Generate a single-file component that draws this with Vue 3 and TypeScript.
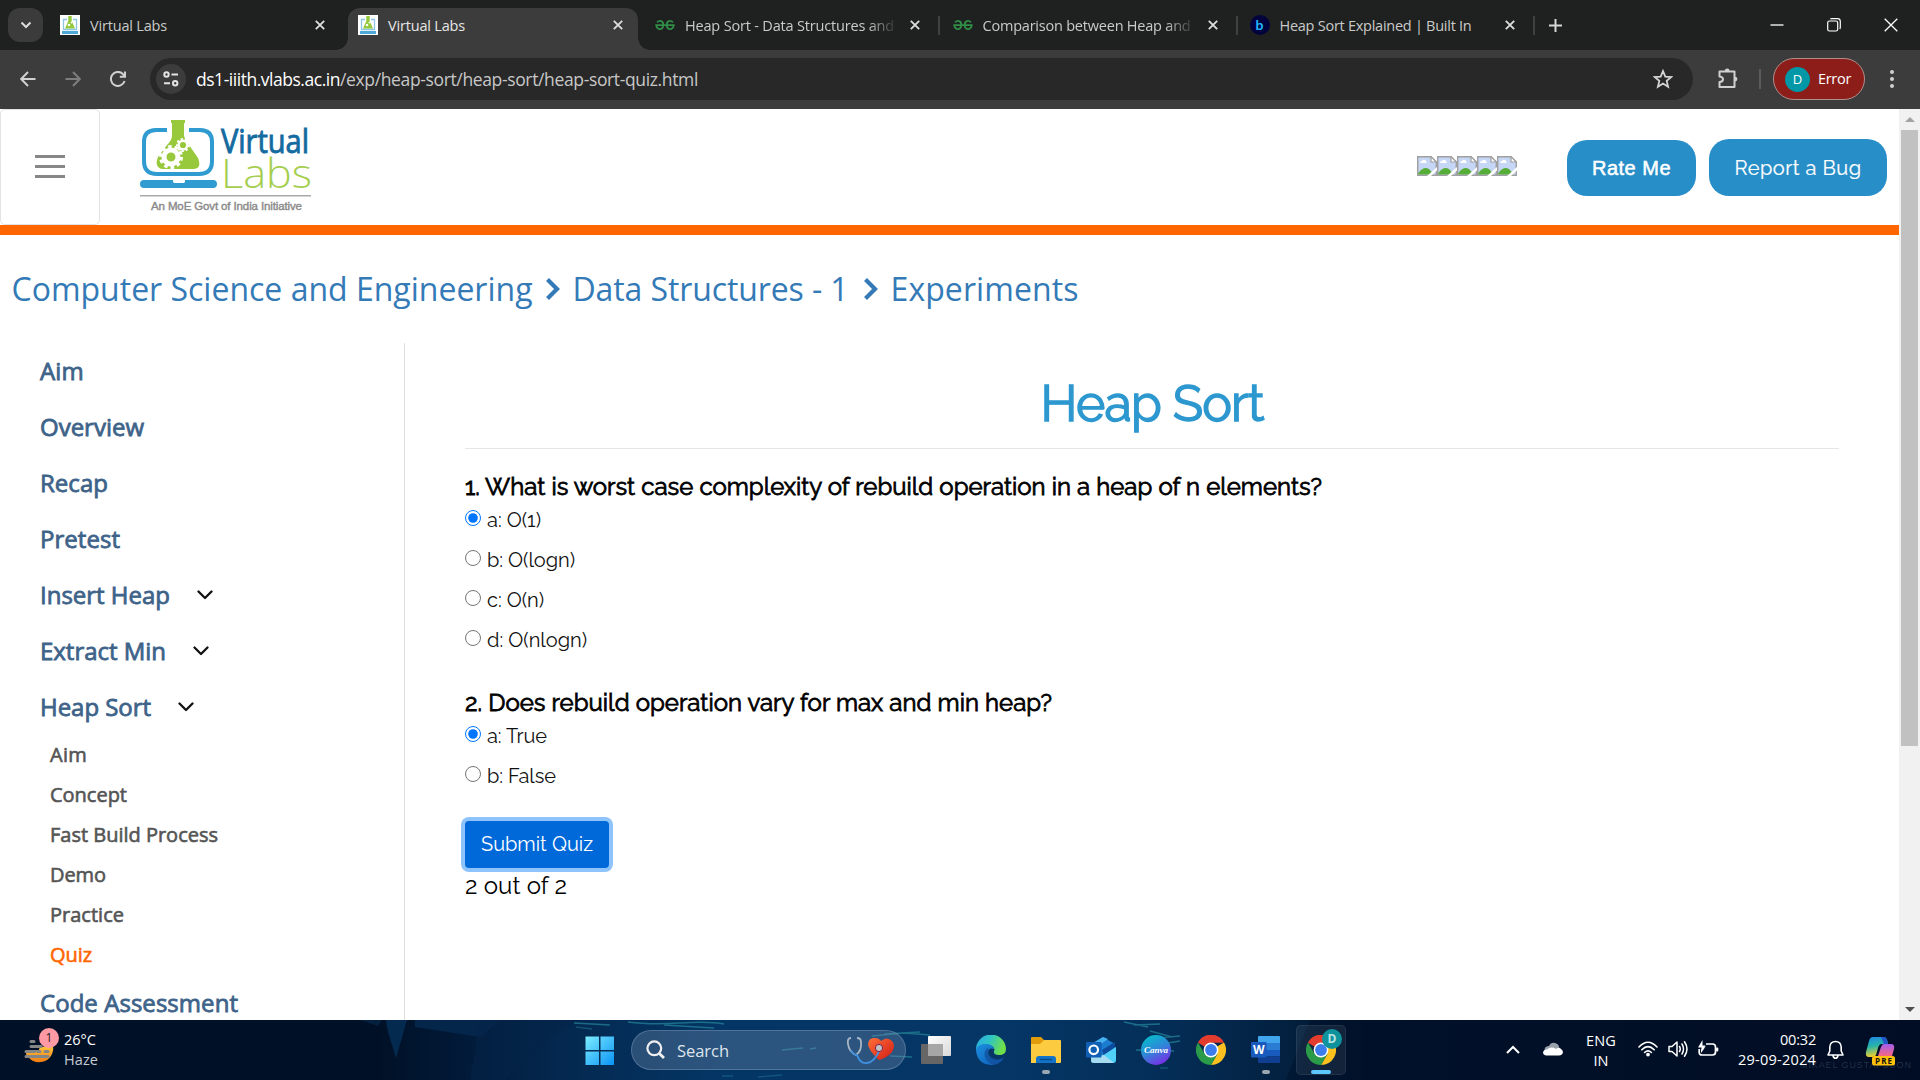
<script setup lang="ts">
import { ref } from 'vue'

interface Tab {
  title: string
  icon: 'vlabs' | 'gfg' | 'builtin'
  active?: boolean
  width?: number
  sep?: boolean
}
interface NavItem {
  label: string
  width: number
  expandable?: boolean
}
interface Option {
  key: string
  text: string
  width: number
}
interface Question {
  text: string
  width: number
  options: Option[]
}

// Tracks a line of text so that it spans the given width in pixels.
const vFit = {
  mounted(el: HTMLElement, binding: { value?: number }) {
    if (!binding.value) return
    const count = (el.textContent ?? '').trim().length
    const natural = el.getBoundingClientRect().width
    el.style.letterSpacing = `${(binding.value - natural) / count}px`
  },
}

const tabs: Tab[] = [
  { title: 'Virtual Labs', icon: 'vlabs', width: 77 },
  { title: 'Virtual Labs', icon: 'vlabs', width: 77, active: true },
  { title: 'Heap Sort - Data Structures and', icon: 'gfg', width: 209, sep: true },
  { title: 'Comparison between Heap and', icon: 'gfg', width: 208, sep: true },
  { title: 'Heap Sort Explained | Built In', icon: 'builtin', width: 192, sep: true },
]

const crumbs = [
  { label: 'Computer Science and Engineering', width: 521 },
  { label: 'Data Structures - 1', width: 276 },
  { label: 'Experiments', width: 188 },
]

const nav: NavItem[] = [
  { label: 'Aim', width: 44 },
  { label: 'Overview', width: 104 },
  { label: 'Recap', width: 68 },
  { label: 'Pretest', width: 80 },
  { label: 'Insert Heap', width: 130, expandable: true },
  { label: 'Extract Min', width: 126, expandable: true },
  { label: 'Heap Sort', width: 111, expandable: true },
]

const subNav: NavItem[] = [
  { label: 'Aim', width: 37 },
  { label: 'Concept', width: 77 },
  { label: 'Fast Build Process', width: 168 },
  { label: 'Demo', width: 56 },
  { label: 'Practice', width: 74 },
  { label: 'Quiz', width: 42 },
]

const questions: Question[] = [
  {
    text: '1. What is worst case complexity of rebuild operation in a heap of n elements?',
    width: 857,
    options: [
      { key: 'a', text: 'a: O(1)', width: 54 },
      { key: 'b', text: 'b: O(logn)', width: 88 },
      { key: 'c', text: 'c: O(n)', width: 57 },
      { key: 'd', text: 'd: O(nlogn)', width: 100 },
    ],
  },
  {
    text: '2. Does rebuild operation vary for max and min heap?',
    width: 587,
    options: [
      { key: 'a', text: 'a: True', width: 60 },
      { key: 'b', text: 'b: False', width: 69 },
    ],
  },
]

const answers = ref<string[]>(['a', 'a'])
</script>

<template>
  <div class="screen">
    <svg class="defs" width="0" height="0">
      <defs>
        <symbol id="flask" viewBox="0 0 171 92">
          <path d="M27 11H16Q4 11 4 23V42Q4 55 17 55H59Q72 55 72 42V23Q72 11 60 11H49" fill="none" stroke="#2f9bd1" stroke-width="4" />
          <path d="M31 1H45V4H44V17Q45 22 49 26L58 39Q62 49 54 50H22Q14 48 18 38L27 26Q32 21 32 17V4H31Z" fill="#98c93c" />
          <circle cx="31" cy="38" r="7" fill="none" stroke="#fff" stroke-width="5" />
          <circle cx="31" cy="38" r="10.5" fill="none" stroke="#fff" stroke-width="3" stroke-dasharray="3.6 3" />
          <circle cx="43" cy="26" r="4.3" fill="none" stroke="#fff" stroke-width="2.4" />
          <circle cx="43" cy="26" r="6" fill="none" stroke="#fff" stroke-width="2" stroke-dasharray="2.2 2" />
          <path d="M4 61H33V62.5Q33 64 35 64H43Q45 64 45 62.5V61H73Q77 61 77 65T73 69H4Q0 69 0 65T4 61Z" fill="#2f9bd1" />
        </symbol>
        <symbol id="chrome" viewBox="0 0 30 30">
          <path d="M15 15L2 7.5A15 15 0 0 1 28 7.5L15 7.5Z" fill="#e33b2e" />
          <path d="M15 15L28 7.5A15 15 0 0 1 15 30L21.5 18.8Z" fill="#fcc01f" />
          <path d="M15 15L21.5 18.8L15 30A15 15 0 0 1 2 7.5L8.5 18.8Z" fill="#2a9b48" />
          <path d="M2 7.5A15 15 0 0 1 28 7.5H15L9 12Z" fill="#e33b2e" />
          <circle cx="15" cy="15" r="7.4" fill="#fff" />
          <circle cx="15" cy="15" r="5.9" fill="#3b7ded" />
        </symbol>
      </defs>
    </svg>

    <header class="tabstrip">
      <button class="tab-search" aria-label="Search tabs">
        <svg width="12" height="8" viewBox="0 0 12 8"><path d="M1.5 1.5L6 6L10.500 1.5" fill="none" stroke="#dcdcdc" stroke-width="2" /></svg>
      </button>
      <div v-for="(tab, i) in tabs" :key="i" class="tab" :class="{ active: tab.active, sep: tab.sep }">
        <svg v-if="tab.icon === 'vlabs'" class="fav" width="20" height="20" viewBox="0 0 20 20">
          <rect width="20" height="20" fill="#fff" />
          <path d="M7 4.500H3.500V14.500H16.500V4.500H13" fill="none" stroke="#8cc6e4" stroke-width="1.300" />
          <path d="M8.300 1H11.700V6L15 13.500H5L8.300 6Z" fill="#92c83a" />
          <circle cx="9" cy="10" r="1.300" fill="#fff" /><circle cx="11.500" cy="7.500" r=".9" fill="#fff" />
          <rect x="2" y="16" width="16" height="3" fill="#4ea9d8" />
        </svg>
        <svg v-else-if="tab.icon === 'gfg'" class="fav" width="20" height="20" viewBox="0 0 20 20">
          <g fill="none" stroke="#2f8d46" stroke-width="1.800">
            <path d="M2 7.300Q4.500 4.800 7 6.500Q9 8.500 8 12Q6.500 15 3.500 13.800Q1.300 12.500 1.200 10.200H18.800Q18.700 12.500 16.500 13.800Q13.500 15 12 12Q11 8.500 13 6.500Q15.500 4.800 18 7.300" />
          </g>
        </svg>
        <span v-else class="fav built">b</span>
        <span class="tab-clip" :class="{ fade: tab.sep && tab.icon === 'gfg' }"><span v-fit="tab.width" class="fit">{{ tab.title }}</span></span>
        <svg class="tab-close" width="10" height="10" viewBox="0 0 10 10"><path d="M.8 .8L9.200 9.200M9.200 .8L.8 9.200" stroke="#dedede" stroke-width="1.800" /></svg>
      </div>
      <svg class="plus" width="13" height="13" viewBox="0 0 13 13"><path d="M6.500 0V13M0 6.500H13" stroke="#d6d6d6" stroke-width="2" /></svg>
      <div class="win">
        <svg width="14" height="14" viewBox="0 0 14 14"><path d="M.5 7H13.500" stroke="#fff" stroke-width="1.300" /></svg>
        <svg width="14" height="14" viewBox="0 0 14 14"><rect x=".7" y="3" width="10" height="10" rx="1.800" fill="none" stroke="#fff" stroke-width="1.200" /><path d="M3.300 1Q3.600 .7 5 .7H10.500Q13.300 .7 13.300 3.500V9Q13.300 10.500 12.700 11" fill="none" stroke="#fff" stroke-width="1.200" /></svg>
        <svg width="14" height="14" viewBox="0 0 14 14"><path d="M.7 .7L13.300 13.300M13.300 .7L.7 13.300" stroke="#fff" stroke-width="1.300" /></svg>
      </div>
    </header>

    <div class="toolbar">
      <svg class="tool" width="16" height="16" viewBox="0 0 16 16"><path d="M15.500 8H1.500M8 1L1.200 8L8 15" fill="none" stroke="#d0d0d0" stroke-width="2" /></svg>
      <svg class="tool" width="16" height="16" viewBox="0 0 16 16"><path d="M.5 8H14.500M8 1L14.800 8L8 15" fill="none" stroke="#7d7d7d" stroke-width="2" /></svg>
      <svg class="tool" width="16" height="16" viewBox="0 0 16 16"><path d="M14.600 10A7 7 0 1 1 13.200 3.300L14.500 5M15 .5V5.800H9.800" fill="none" stroke="#d0d0d0" stroke-width="2" /></svg>
      <div class="omnibox">
        <span class="site-info">
          <svg width="16" height="16" viewBox="0 0 16 16"><g fill="none" stroke="#e4e4e4" stroke-width="2"><circle cx="3.500" cy="3.500" r="2.200" /><path d="M8.500 3.500H15M1 12.200H7" /><circle cx="12.200" cy="12.200" r="2.200" /></g></svg>
        </span>
        <span class="url"><b v-fit="144" class="fit">ds1-iiith.vlabs.ac.in</b><span v-fit="358" class="fit">/exp/heap-sort/heap-sort/heap-sort-quiz.html</span></span>
        <svg class="star" width="20" height="20" viewBox="0 0 20 20"><path d="M10 2L12.300 7.600L18.300 8L13.700 11.900L15.100 17.700L10 14.500L4.900 17.700L6.300 11.900L1.700 8L7.700 7.600Z" fill="none" stroke="#d4d4d4" stroke-width="1.800" /></svg>
      </div>
      <svg class="puzzle" width="22" height="22" viewBox="0 0 22 22"><path d="M2.500 4.500H17.500V20H2.500V15Q6 14.700 6 12.200T2.500 9.400Z" fill="none" stroke="#d0d0d0" stroke-width="2" stroke-linejoin="round" /><path d="M7.800 4A2.400 2.400 0 0 1 12.600 4ZM18 9.700A2.400 2.400 0 0 1 18 14.500Z" fill="#d0d0d0" /></svg>
      <span class="bar-sep"></span>
      <div class="profile"><span class="avatar">D</span><span v-fit="33" class="fit">Error</span></div>
      <span class="dots"><i></i><i></i><i></i></span>
    </div>

    <div class="viewport">
      <div class="page">
        <div class="site-head">
          <button class="burger" aria-label="Menu"><i></i><i></i><i></i></button>
          <svg class="logo" width="172" height="94" viewBox="0 0 172 94">
            <use href="#flask" width="171" height="92" />
            <text x="81" y="34" textLength="88" lengthAdjust="spacingAndGlyphs" class="logo-v">Virtual</text>
            <text x="81" y="68.500" textLength="91" lengthAdjust="spacingAndGlyphs" class="logo-l">Labs</text>
            <rect x="0" y="76" width="171" height="1.500" fill="#a9a9a9" />
            <text x="11" y="90.500" textLength="151" class="logo-t">An MoE Govt of India Initiative</text>
          </svg>
          <div class="stars">
            <svg v-for="n in 5" :key="n" width="20" height="20" viewBox="0 0 20 20">
              <path d="M.7 .7H14L19.300 6V19.300H.7Z" fill="#c6d6f6" stroke="#a0a0a0" stroke-width="1.400" />
              <path d="M3 7Q3 5 5 5Q6 3 8 4Q10 5 9.500 7Z" fill="#fff" />
              <path d="M1.400 18.600V17Q5 12 9 12Q13 12 16 18.600Z" fill="#56ae38" />
              <path d="M14 .7V6H19.300Z" fill="#fff" stroke="#a0a0a0" stroke-width="1.200" />
              <path d="M10 20L20 11V14.500L14 20Z" fill="#fff" />
            </svg>
          </div>
          <button class="pill rate"><span v-fit="79" class="fit">Rate Me</span></button>
          <button class="pill bug"><span v-fit="127" class="fit">Report a Bug</span></button>
        </div>

        <nav class="crumbs">
          <template v-for="(c, i) in crumbs" :key="c.label">
            <svg v-if="i" class="crumb-sep" width="16" height="24" viewBox="0 0 16 24"><path d="M2.500 2.500L12 12L2.500 21.500" fill="none" stroke="#337ab7" stroke-width="4.200" /></svg>
            <a v-fit="c.width" class="fit">{{ c.label }}</a>
          </template>
        </nav>

        <div class="body">
          <aside class="side">
            <div v-for="item in nav" :key="item.label" class="side-item">
              <span v-fit="item.width" class="fit">{{ item.label }}</span>
              <svg v-if="item.expandable" width="16" height="10" viewBox="0 0 16 10"><path d="M1.500 1.500L8 8L14.500 1.500" fill="none" stroke="#111" stroke-width="2.300" stroke-linecap="round" stroke-linejoin="round" /></svg>
            </div>
            <div class="sub">
              <div v-for="item in subNav" :key="item.label" class="sub-item" :class="{ current: item.label === 'Quiz' }">
                <span v-fit="item.width" class="fit">{{ item.label }}</span>
              </div>
            </div>
            <div class="side-item"><span v-fit="198" class="fit">Code Assessment</span></div>
          </aside>

          <main class="main">
            <h1><span v-fit="223" class="fit">Heap Sort</span></h1>
            <hr />
            <section v-for="(q, qi) in questions" :key="qi" class="question">
              <h2><span v-fit="q.width" class="fit">{{ q.text }}</span></h2>
              <label v-for="o in q.options" :key="o.key" class="option">
                <input v-model="answers[qi]" type="radio" :name="`q${qi}`" :value="o.key" />
                <span v-fit="o.width" class="fit">{{ o.text }}</span>
              </label>
            </section>
            <button class="submit"><span v-fit="112" class="fit">Submit Quiz</span></button>
            <div class="result"><span v-fit="102" class="fit">2 out of 2</span></div>
          </main>
        </div>
      </div>
      <div class="scroll">
        <svg width="21" height="21" viewBox="0 0 21 21"><path d="M6 13H16L11 8Z" fill="#a3a3a3" /></svg>
        <span class="thumb"></span>
        <svg class="down" width="21" height="21" viewBox="0 0 21 21"><path d="M6 8H16L11 13Z" fill="#505050" /></svg>
      </div>
    </div>

    <footer class="taskbar">
      <svg class="water" width="1920" height="60" viewBox="0 0 1920 60">
        <path d="M360 0H382L378 6Z" fill="#04203f" />
        <path d="M415 0H500L480 17L415 7Z" fill="#05264b" />
        <path d="M386 0H407L403 14L396 38L388 12Z" fill="#052a4f" />
        <path d="M480 0H580L540 24L505 60H470Z" fill="#042347" opacity=".5" />
        <path d="M1310 0H1400V60H1286Z" fill="#010f28" opacity=".45" />
        <g stroke="#238297" stroke-width="1.600" fill="none" opacity=".75">
          <path d="M574 3L610 5M628 2Q650 5 680 3T724 4M664 5L714 8M872 16L904 13L930 15M884 14L920 12M1124 2L1148 7M1134 5L1160 4M1150 11L1172 17M1158 18L1180 16M1136 30L1174 31M1168 23L1180 21M782 30L803 28M810 29L816 28M890 36L912 37" />
        </g>
        <g stroke="#1b6c88" stroke-width="1.300" opacity=".6"><path d="M722 56H733M758 57L782 55M576 7L592 9M1160 48H1168" /></g>
      </svg>
      <div class="weather">
        <svg width="36" height="36" viewBox="0 0 36 36">
          <defs><linearGradient id="sun" x2="0" y2="1"><stop offset="0" stop-color="#ffc83d" /><stop offset="1" stop-color="#f07a13" /></linearGradient></defs>
          <path d="M2 21A14 14 0 0 0 29 14L16 15L14 20Z" fill="url(#sun)" />
          <g stroke="#858585" stroke-width="3" stroke-linecap="round"><path d="M7 9.500H10M7 14.500H17M2 19.500H16M21 19.500H24M2 24.500H24" /></g>
          <path d="M2 22Q9 24 13 20" stroke="#f3a52b" fill="none" />
        </svg>
        <span class="badge">1</span>
        <div class="weather-text"><span v-fit="32" class="fit">26°C</span><em v-fit="34" class="fit">Haze</em></div>
      </div>
      <div class="apps">
        <svg class="start" width="30" height="30" viewBox="0 0 30 30">
          <defs><linearGradient id="win" x2="1" y2="1"><stop offset="0" stop-color="#7cecff" /><stop offset="1" stop-color="#0a93f5" /></linearGradient></defs>
          <path d="M.5 .5H14V14H.5ZM15.500 .5H29V14H15.500ZM.5 15.500H14V29H.5ZM15.500 15.500H29V29H15.500Z" fill="url(#win)" />
        </svg>
        <div class="search">
          <svg width="20" height="20" viewBox="0 0 20 20"><circle cx="8.300" cy="8.300" r="6.900" fill="none" stroke="#f0f0f0" stroke-width="2.200" /><path d="M13 13.200L18 18" stroke="#f0f0f0" stroke-width="2.800" /></svg>
          <span v-fit="52" class="fit">Search</span>
          <svg class="heart" width="50" height="30" viewBox="0 0 50 30">
            <defs><linearGradient id="red" x2="1" y2="1"><stop offset="0" stop-color="#ff7038" /><stop offset="1" stop-color="#cf1b16" /></linearGradient></defs>
            <path d="M33 25Q22 15 22 9Q23 2 29 3Q33 3 35 6Q41 1 46 6Q50 10 46 17Q41 23 33 25Z" fill="url(#red)" />
            <path d="M5 3Q1 3 2 9Q3 17 10 20Q16 16 15 7Q15 3 11 3" fill="none" stroke="#a9b7c4" stroke-width="1.800" />
            <path d="M5 15Q7 20 11 20Q14 29 21 28Q29 27 34 14" fill="none" stroke="#3f90df" stroke-width="1.900" />
            <circle cx="33" cy="13" r="3.600" fill="#c4c4c4" stroke="#725" />
          </svg>
        </div>
        <svg class="app" width="30" height="30" viewBox="0 0 30 30">
          <defs><linearGradient id="tv" x2="1" y2="1"><stop offset="0" stop-color="#fff" /><stop offset="1" stop-color="#d8d8d8" /></linearGradient></defs>
          <rect x="0" y="9" width="22" height="20" rx="1" fill="#666" /><rect x="7" y="1" width="23" height="20" rx="1" fill="url(#tv)" /><rect x="7" y="9" width="15" height="12" fill="#a6a6a6" />
        </svg>
        <svg class="app" width="30" height="30" viewBox="0 0 30 30">
          <defs>
            <linearGradient id="e1" x2="1" y2=".3"><stop offset="0" stop-color="#2aa7e8" /><stop offset=".5" stop-color="#2fc4c4" /><stop offset="1" stop-color="#6fe04a" /></linearGradient>
            <linearGradient id="e2" x2="1" y2="1"><stop offset="0" stop-color="#1b8fe0" /><stop offset="1" stop-color="#0d5ab3" /></linearGradient>
          </defs>
          <path d="M0 15A15 15 0 0 1 30 14Q30 20 23 20Q17 20 18 16Q20 13 14 10Q4 8 0 15Z" fill="url(#e1)" />
          <path d="M0 15Q2 9 9 9Q17 9 18 14Q12 12 12 18Q13 26 22 25Q26 25 28 22Q24 30 15 30Q1 29 0 15Z" fill="url(#e2)" />
          <path d="M12 12Q6 18 10 24Q13 29 18 29.500Q26 28 28 22Q24 25 20 24Q12 22 12 16Z" fill="#134f9c" opacity=".75" />
        </svg>
        <div class="app dot">
          <svg width="30" height="30" viewBox="0 0 30 30">
            <path d="M0 3Q0 2 1 2H10L13 5H24V12H0Z" fill="#e19c0b" /><path d="M0 9H9L13 5H29Q30 5 30 6V27Q30 28 29 28H0Z" fill="#fccb40" />
            <path d="M5 28V24Q5 21 8 21H22Q25 21 25 24V28Z" fill="#1273c8" /><path d="M9 24.500H21" stroke="#0a4a88" stroke-width="1.400" />
          </svg>
        </div>
        <svg class="app" width="30" height="30" viewBox="0 0 30 30">
          <path d="M4 10L17 2L29 9V14L18 22L4 18Z" fill="#1c7cd0" /><path d="M7 8L17 2L22 4L8 14Z" fill="#46b0ee" /><path d="M16 15L29 7V12L18 21Z" fill="#0d4a9b" />
          <path d="M5 21L16 21L30 12V25Q30 28 27 28H8Q5 28 5 25Z" fill="#4fd1f7" /><path d="M5 22L18 20L28 28H8Q5 28 5 25Z" fill="#a4dbf0" />
          <rect x="0" y="7" width="15.500" height="15.500" rx="1" fill="#0f5fb5" /><circle cx="7.700" cy="14.800" r="4.300" fill="none" stroke="#fff" stroke-width="2.200" />
        </svg>
        <svg class="app" width="30" height="30" viewBox="0 0 30 30">
          <defs><linearGradient id="cv" x1=".2" x2=".7" y2="1"><stop offset="0" stop-color="#04bfcb" /><stop offset=".5" stop-color="#2f86d8" /><stop offset="1" stop-color="#7d2ae8" /></linearGradient></defs>
          <circle cx="15" cy="15" r="15" fill="url(#cv)" /><text x="3" y="18" textLength="24" class="canva">Canva</text>
        </svg>
        <svg class="app" width="30" height="30"><use href="#chrome" width="30" height="30" /></svg>
        <div class="app dot">
          <svg width="30" height="30" viewBox="0 0 30 30">
            <path d="M7 2Q7 1 8 1H28Q29 1 29 2V8H7Z" fill="#41a5ee" /><path d="M7 8H29V15H7Z" fill="#2b7cd3" /><path d="M7 15H29V21.500H7Z" fill="#185abd" /><path d="M7 21.500H29V27Q29 28 28 28H8Q7 28 7 27Z" fill="#103f91" />
            <rect x="0" y="7" width="15.500" height="15.500" rx="1" fill="#185abd" /><text x="7.700" y="19" text-anchor="middle" class="word">W</text>
          </svg>
        </div>
        <div class="tile">
          <svg width="30" height="30"><use href="#chrome" width="30" height="30" /></svg>
          <span class="tile-badge">D</span>
        </div>
      </div>
      <span class="credit">MIKAEL GUSTAFSSON</span>
      <div class="tray">
        <svg class="t-up" width="14" height="9" viewBox="0 0 14 9"><path d="M1 8L7 2L13 8" fill="none" stroke="#fff" stroke-width="2" /></svg>
        <svg class="t-cloud" width="20" height="14" viewBox="0 0 20 14"><path d="M2 11Q0 4 6 4Q8 0 12 1Q16 2 16 5L10 12Z" fill="#9ba1ab" /><path d="M3 13.500Q0 13 0 10Q1 7 4 7.500Q8 4 13 7Q16 4 18 7Q20 8 20 10.500Q19 13.500 16 13.500Z" fill="#fff" /></svg>
        <div class="lang"><span v-fit="30" class="fit">ENG</span><span v-fit="15" class="fit">IN</span></div>
        <svg class="t-wifi" width="20" height="16" viewBox="0 0 20 16"><g fill="none" stroke="#fff" stroke-width="1.600" stroke-linecap="round"><path d="M1 6Q10 -3.500 19 6M3.800 8.800Q10 2.500 16.200 8.800M6.600 11.500Q10 8.200 13.400 11.500" /></g><circle cx="10" cy="13.600" r="1.900" fill="#fff" /></svg>
        <svg class="t-vol" width="20" height="18" viewBox="0 0 20 18"><g fill="none" stroke="#fff" stroke-width="1.500" stroke-linecap="round" stroke-linejoin="round"><path d="M1 6.500H4L9 2V16L4 11.500H1ZM11.500 6.500Q13 9 11.500 11.500M14 4Q17 9 14 14M16.500 1.800Q21.500 9 16.500 16.200" /></g></svg>
        <svg class="t-bat" width="21" height="18" viewBox="0 0 21 18"><path d="M8 4H14.500Q17.500 4 17.500 7V12Q17.500 15 14.500 15H4Q1.200 15 1.200 12.500V9" fill="none" stroke="#fff" stroke-width="1.700" /><rect x="18" y="7.500" width="2.300" height="4" rx="1" fill="#fff" /><path d="M4.500 0L0 7.500H3.500L3 12.500L7.500 5.500H4.500Z" fill="#fff" /><path d="M3 13V10L8 6Z" fill="#fff" /></svg>
        <div class="clock"><span v-fit="36" class="fit">00:32</span><span v-fit="78" class="fit">29-09-2024</span></div>
        <svg class="t-bell" width="17" height="20" viewBox="0 0 17 20"><path d="M1 15L2.800 11V7.300Q3 1.500 8.500 1.500T14.200 7.300V11L16 15ZM6 15.500Q6.500 18.300 8.500 18.300T11 15.500" fill="none" stroke="#fff" stroke-width="1.600" stroke-linejoin="round" /></svg>
        <svg class="t-pilot" width="31" height="30" viewBox="0 0 31 30">
          <defs>
            <linearGradient id="p1" x2=".2" y2="1"><stop offset="0" stop-color="#1e87e8" /><stop offset=".5" stop-color="#28b4a8" /><stop offset="1" stop-color="#f0cf2b" /></linearGradient>
            <linearGradient id="p2" x2="0" y2="1"><stop offset="0" stop-color="#a35cf0" /><stop offset="1" stop-color="#f5687e" /></linearGradient>
          </defs>
          <path d="M8 1H19Q22 1 23 8H17Q14 8 13 12L11 19Q10 21 7 21H4Q0 21 1 16L4 5Q5 1 8 1Z" fill="url(#p1)" /><path d="M16 1H19Q22 1 23 8H19Z" fill="#2456c9" />
          <path d="M19 8H26Q30 8 29 13L27 20H13L16 11Q17 8 19 8Z" fill="url(#p2)" />
          <rect x="7" y="20" width="23" height="9.500" rx="2.500" fill="#ffc20a" /><text x="18.500" y="27.600" text-anchor="middle" textLength="17" class="pre">PRE</text>
        </svg>
      </div>
    </footer>
  </div>
</template>

<style>
html, body { margin: 0; overflow: hidden; }
</style>

<style scoped>
* { box-sizing: border-box; }
svg { display: block; flex: none; }
button { border: 0; padding: 0; margin: 0; background: none; font: inherit; }
.fit { display: inline-block; white-space: pre; flex: none; }
.screen { width: 1920px; height: 1080px; display: flex; flex-direction: column; overflow: hidden; font-family: "Open Sans", "Noto Sans", sans-serif; background: #fff; }
.defs { position: absolute; }

.tabstrip { height: 50px; flex: none; background: #1f2120; display: flex; align-items: flex-start; padding-left: 8px; font-size: 14.500px; color: #c9cac9; }
.tab-search { width: 35px; height: 34px; margin-top: 8px; border-radius: 12px; background: #3a3b3a; display: flex; align-items: center; justify-content: center; }
.tab { width: 297.500px; height: 50px; display: flex; align-items: center; padding-left: 17px; position: relative; flex: none; }
.tab:nth-child(2) { width: 305px; }
.tab:nth-child(5), .tab:nth-child(6) { width: 297px; }
.tab.active { width: 290px; margin-right: 8px; height: 42px; margin-top: 8px; padding: 0 0 8px 10px; background: #3c3c3c; border-radius: 12px 12px 0 0; color: #e6e6e6; }
.tab.active::before, .tab.active::after { content: ""; position: absolute; bottom: 0; width: 12px; height: 12px; }
.tab.active::before { left: -12px; background: radial-gradient(circle at 0 0, transparent 11.500px, #3c3c3c 12px); }
.tab.active::after { right: -12px; background: radial-gradient(circle at 100% 0, transparent 11.500px, #3c3c3c 12px); }
.tab.sep { padding-left: 9px; }
.tab.sep::after { content: ""; width: 2px; height: 19px; background: #3f4140; margin-left: 18px; }
.fav { width: 20px; height: 20px; margin-right: 10px; flex: none; }
.built { border-radius: 50%; background: #02033c; color: #1fb6ff; font: bold 14px/20px Lato, sans-serif; text-align: center; }
.tab-clip { width: 210px; line-height: 20px; flex: none; padding-top: 1px; }
.tab-clip.fade { -webkit-mask-image: linear-gradient(90deg, #000 182px, transparent 213px); }
.tab-close { margin-left: 15px; }
.plus { margin: 19px 0 0 11px; }
.win { display: flex; gap: 43px; margin: 18px 22px 0 auto; }

.toolbar { height: 59px; flex: none; background: #3c3c3c; display: flex; align-items: center; padding: 0 0 1px 20px; }
.tool { margin-right: 29px; }
.omnibox { width: 1543px; height: 42px; margin-left: -5px; border-radius: 21px; background: #282828; display: flex; align-items: center; padding-left: 6px; }
.site-info { width: 30px; height: 30px; border-radius: 50%; background: #3c3c3c; display: flex; align-items: center; justify-content: center; }
.url { margin-left: 10px; font-size: 17.500px; line-height: 24px; color: #c7c7c7; }
.url b { font-weight: 400; color: #fff; }
.star { margin: 0 20px 0 auto; }
.puzzle { margin: 0 0 2px 24px; }
.bar-sep { width: 2px; height: 20px; background: #5b5b5b; margin-left: 20px; }
.profile { width: 92px; height: 42px; margin-left: 12px; border: 1px solid #b08e8c; border-radius: 21px; background: #8c1d18; display: flex; align-items: center; padding-left: 11px; gap: 8px; color: #fff; font-size: 14.500px; line-height: 20px; }
.profile .fit { padding-bottom: 1px; }
.avatar { width: 25px; height: 25px; border-radius: 50%; background: #0097a7; font-size: 13px; line-height: 24px; text-align: center; }
.dots { display: flex; flex-direction: column; gap: 3px; margin-left: 25px; }
.dots i { width: 4px; height: 4px; border-radius: 50%; background: #d0d0d0; }

.viewport { height: 911px; flex: none; display: flex; }
.page { width: 1899px; height: 911px; overflow: hidden; background: #fff; }
.site-head { height: 126px; border-bottom: 10px solid #f60; display: flex; position: relative; }
.burger { width: 100px; height: 116px; border: 1px solid #e3e3e3; border-radius: 5px; display: flex; flex-direction: column; align-items: center; justify-content: center; gap: 7.500px; padding-bottom: 1px; }
.burger i { width: 30px; height: 2.500px; background: #878787; }
.logo { margin: 10px 0 0 40px; }
.logo-v { font: 500 32px "Open Sans", sans-serif; fill: #146ba0; stroke: #146ba0; stroke-width: .9px; }
.logo-l { font: 300 41px "Open Sans", sans-serif; fill: #a5ce4f; }
.logo-t { font: 11.500px "Liberation Sans", Arial, sans-serif; fill: #8a8a8a; stroke: #8a8a8a; stroke-width: .4px; }
.stars { display: flex; margin: 47px 50px 0 auto; width: 100px; }
.pill { border-radius: 20px; background: #288ec8; color: #fff; font-size: 20px; flex: none; }
.rate { width: 129px; height: 56px; margin: 31px 13px 0 0; font-family: "Liberation Sans", Arial, sans-serif; -webkit-text-stroke: .5px #fff; }
.bug { width: 178px; height: 57px; margin: 30px 12px 0 0; font-family: Raleway, Lato, sans-serif; font-size: 20px; -webkit-text-stroke: .2px #fff; }
.crumbs { height: 107px; padding-left: 11.500px; display: flex; align-items: center; font-size: 32px; line-height: 44px; color: #337ab7; }
.crumb-sep { margin: 0 12px; }
.crumb-sep ~ .crumb-sep { margin-left: 14px; }

.body { display: flex; margin-top: 1px; }
.side { width: 405px; height: 677px; border-right: 1px solid #dfdfdf; padding-left: 40px; flex: none; }
.side-item { height: 56px; display: flex; align-items: center; font-size: 24px; line-height: 34px; color: #3e6389; -webkit-text-stroke: .8px #3e6389; }
.side-item svg { margin-left: 27px; }
.sub { padding-left: 10px; }
.sub-item { height: 40px; display: flex; align-items: center; font-size: 20px; line-height: 28px; color: #555; -webkit-text-stroke: .6px #555; }
.sub-item.current { color: #f60; -webkit-text-stroke: .6px #f60; }
.main { width: 1374px; margin-left: 60px; font-family: Raleway, Lato, sans-serif; color: #000; }
h1 { margin: 31px 0 0; font-size: 50px; line-height: 60px; font-weight: 400; text-align: center; color: #2d98cf; -webkit-text-stroke: 1.400px #2d98cf; }
hr { margin: 14px 0 23px; border: 0; height: 1px; background: #e6e6e6; }
.question { margin-bottom: 30px; }
h2 { margin: 0 0 -3px; font-size: 24px; line-height: 29px; font-weight: 400; -webkit-text-stroke: .8px #000; }
.option { display: flex; align-items: center; height: 40px; font-size: 20px; line-height: 28px; font-weight: 400; color: #111; font-variant-numeric: oldstyle-nums; font-feature-settings: "calt" 0; }
.option .fit { padding-top: 3px; }
.option input { width: 16px; height: 16px; margin: 0 6px 0 0; accent-color: #0075ff; }
.submit { display: block; width: 144px; height: 47px; margin-top: -3px; padding-bottom: 2px; border-radius: 4px; background: #0069d9; box-shadow: 0 0 0 4px #8fc3fc; color: #fff; font-size: 20px; line-height: 28px; text-align: center; }
.result { font-size: 24px; line-height: 35px; }

.scroll { width: 21px; height: 911px; background: #f1f1f1; display: flex; flex-direction: column; }
.thumb { width: 17px; height: 616px; margin-left: 2px; background: #c1c1c1; }
.down { margin-top: auto; }

.taskbar { height: 60px; flex: none; position: relative; display: flex; background: linear-gradient(90deg, #001127 0, #001127 380px, #021c3c 480px, #04284f 560px, #043665 720px, #053666 1000px, #042f59 1150px, #03203f 1290px, #011129 1370px, #010d24 100%); color: #fff; }
.water { position: absolute; left: 0; top: 0; }
.weather { position: relative; display: flex; width: 585px; padding: 7px 0 0 24px; }
.weather svg { margin-top: 5px; }
.badge { position: absolute; left: 39px; top: 8px; width: 20px; height: 20px; border-radius: 50%; background: #ff99a4; color: #222; font-size: 12px; line-height: 20px; text-align: center; }
.weather-text { margin-left: 4px; font-size: 14.500px; line-height: 20px; display: flex; flex-direction: column; align-items: flex-start; padding-top: 3px; }
.weather-text em { font-style: normal; color: #c6cad1; }
.apps { position: relative; display: flex; align-items: flex-start; }
.start { margin: 16px 16px 0 0; }
.search { width: 275px; height: 40px; margin: 10px 15px 0 0; border-radius: 20px; background: rgba(120, 145, 175, .34); border: 1px solid rgba(150, 175, 205, .35); display: flex; align-items: center; padding-left: 14px; font-size: 16.500px; line-height: 24px; color: #dfe5ec; }
.search .fit { margin-left: 11px; padding-top: 2px; }
.heart { margin-left: auto; margin-right: 9px; }
.app { margin: 15px 25px 0 0; width: 30px; flex: none; }
.dot { position: relative; }
.dot::after { content: ""; display: block; width: 8px; height: 4px; margin: 5px auto 0; border-radius: 2px; background: #9ba6b3; }
.tile { position: relative; width: 50px; height: 50px; margin: 5px 0 0 -10px; padding: 10px; border-radius: 5px; background: rgba(255, 255, 255, .07); border: 1px solid rgba(255, 255, 255, .07); }
.tile svg { margin: -1px; }
.tile::after { content: ""; position: absolute; left: 14px; bottom: 0; width: 20px; height: 4px; border-radius: 2px; background: #5cc8fd; }
.tile-badge { position: absolute; left: 25px; top: 3px; width: 20px; height: 20px; border-radius: 50%; background: #0e929c; color: #b9e4e6; font: bold 12px/20px "Open Sans", sans-serif; text-align: center; }
.canva { font: italic bold 9px "Liberation Serif", serif; fill: #fff; }
.word { font: bold 12px "Open Sans", sans-serif; fill: #fff; }
.tray { position: relative; display: flex; margin-left: auto; padding-right: 24px; font-size: 14.500px; line-height: 20px; }
.t-up { margin: 25px 23px 0 0; }
.t-cloud { margin: 22px 23px 0 0; }
.lang { width: 30px; display: flex; flex-direction: column; align-items: center; padding-top: 11px; margin-right: 22px; }
.t-wifi { margin: 21px 10px 0 0; }
.t-vol { margin: 20px 10px 0 0; }
.t-bat { margin: 20px 19px 0 0; }
.clock { width: 78px; display: flex; flex-direction: column; align-items: flex-end; padding-top: 10px; margin-right: 11px; }
.t-bell { margin: 20px 21px 0 0; }
.t-pilot { margin: 16px 0 0; }
.pre { font: bold 8px "Open Sans", sans-serif; fill: #111; }
.credit { position: absolute; left: 1800px; top: 39px; font: 9px/12px "Liberation Sans", sans-serif; letter-spacing: .9px; white-space: nowrap; color: rgba(140, 155, 180, .25); }
</style>
